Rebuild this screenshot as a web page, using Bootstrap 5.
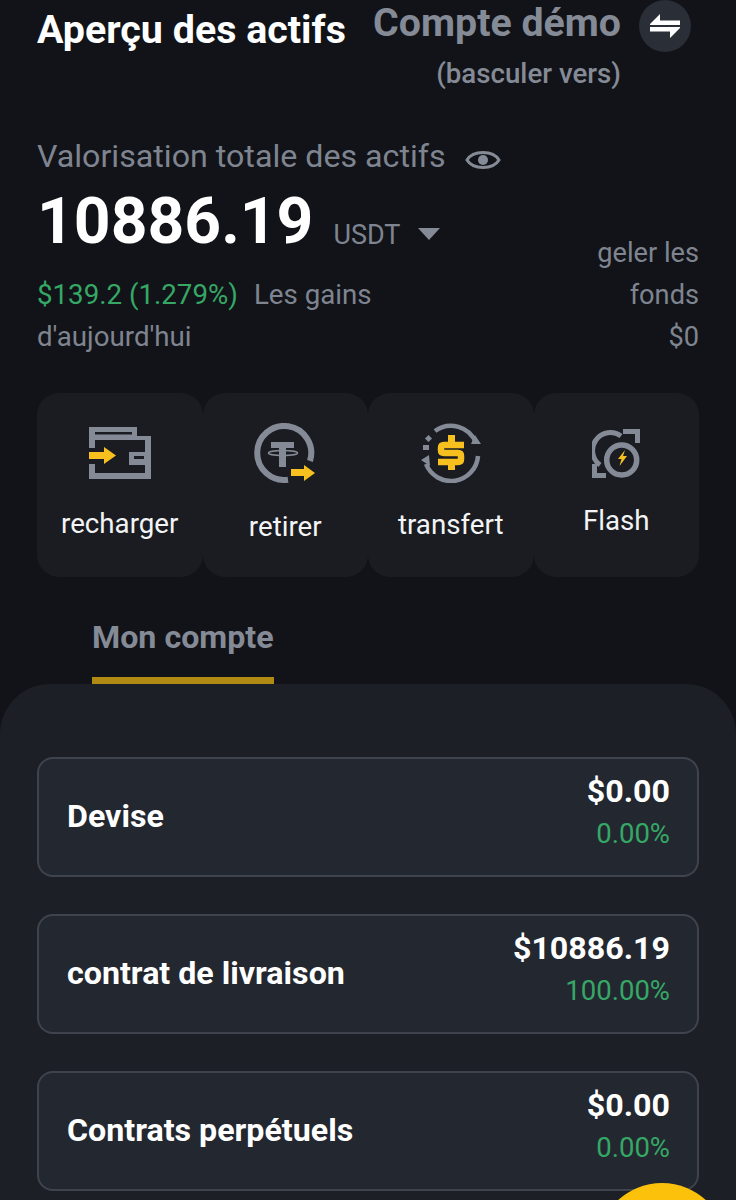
<!DOCTYPE html>
<html lang="fr">
<head>
    <meta charset="UTF-8">
    <meta name="viewport" content="width=device-width, initial-scale=1.0">
    <link href="https://cdn.jsdelivr.net/npm/bootstrap@5.3.1/dist/css/bootstrap.min.css" rel="stylesheet">
    <title>Aperçu des actifs</title>
    <style>
        html, body { height: 1200px; overflow: hidden; }
        body { background: #121318; font-family: Roboto, "Liberation Sans", sans-serif; color: #fff; }
        .top-area { padding: 0 37px; height: 684px; }
        .head-row { height: 136px; }
        .head-title { font-size: 39.4px; font-weight: 700; line-height: 42px; margin-top: 9px; }
        .demo-wrap { padding-right: 8px; gap: 18px; }
        .demo-text { color: #858b96; font-weight: 500; text-align: right; }
        .demo-name { font-size: 39.3px; font-weight: 700; line-height: 42px; margin-top: 2px; }
        .demo-sub { font-size: 27.7px; line-height: 32px; margin-top: 14px; }
        .swap-btn { width: 52px; height: 52px; border-radius: 50%; background: #2a2e37; }
        .muted-txt { color: #7f8590; }
        .total-label { font-size: 32.2px; line-height: 40px; }
        .eye-icon { margin-left: 3px; margin-top: 7px; }
        .total-num { font-size: 64.2px; font-weight: 700; line-height: 78px; margin-top: 6px; }
        .unit-txt { font-size: 27px; color: #7f8590; margin-left: 20px; margin-top: 39px; }
        .caret-down { width: 0; height: 0; border-left: 11px solid transparent; border-right: 11px solid transparent; border-top: 12px solid #858b96; margin-left: 18px; margin-top: 52px; }
        .gain-row { font-size: 27.7px; line-height: 42px; margin-top: 14px; }
        .gain-col { width: 380px; }
        .gain-word { margin-left: 16px; }
        .up-txt { color: #35a866; }
        .frozen-col { text-align: right; width: 120px; font-size: 27.2px; margin-top: -42px; }
        .tile-row { margin-top: 35px; }
        .tile-box { width: 25%; height: 184px; padding-top: 28px; background: #1a1c22; border-radius: 22px; }
        .icon-slot { height: 64px; }
        .tile-label { font-size: 27.7px; line-height: 32px; color: #f3f4f5; }
        .label-a { margin-top: 23px; }
        .label-b { margin-top: 26px; }
        .label-c { margin-top: 24px; }
        .label-d { margin-top: 20px; }
        .tab-row { padding-left: 55px; margin-top: 40px; }
        .tab-item { color: #858b96; font-size: 32.2px; font-weight: 700; line-height: 40px; border-bottom: 7px solid #b18a14; padding-bottom: 20px; }
        .panel-box { position: relative; overflow: hidden; background: #1c1f26; border-radius: 50px 50px 0 0; height: 516px; padding: 73px 37px 0; }
        .acct-card { background: #232730; border: 2px solid #3e434d; border-radius: 16px; height: 119.5px; padding: 0 27px 0 28px; margin-bottom: 37.5px; }
        .acct-name { font-size: 32.2px; font-weight: 700; margin-bottom: 2px; }
        .acct-amounts { margin-bottom: 6px; }
        .acct-val { font-size: 32.2px; font-weight: 700; line-height: 40px; text-align: right; }
        .acct-pct { font-size: 27.5px; line-height: 46px; text-align: right; }
        .fab-circle { position: absolute; left: 597px; top: 499px; width: 130px; height: 130px; border-radius: 50%; background: #fcc10a; }
    </style>
</head>
<body>
    <div class="top-area">
        <div class="d-flex justify-content-between head-row">
            <div class="head-title">Aperçu des actifs</div>
            <div class="d-flex demo-wrap">
                <div class="demo-text">
                    <div class="demo-name">Compte démo</div>
                    <div class="demo-sub">(basculer vers)</div>
                </div>
                <div class="swap-btn d-flex align-items-center justify-content-center">
                    <svg width="32" height="24" viewBox="0 0 32 24"><path d="M11 0 L1 10 V11 H31 V6.500 H11 Z" fill="#fff"/><path d="M21 24 L31 14 V13 H1 V17.500 H21 Z" fill="#fff"/></svg>
                </div>
            </div>
        </div>

        <div class="d-flex align-items-center gap-3">
            <div class="total-label muted-txt">Valorisation totale des actifs</div>
            <svg class="eye-icon" width="36" height="26" viewBox="0 0 36 26"><path d="M2 13 C8 3 28 3 34 13 C28 23 8 23 2 13 Z" fill="none" stroke="#858b96" stroke-width="3"/><circle cx="18" cy="13" r="5" fill="#858b96"/></svg>
        </div>
        <div class="d-flex align-items-start">
            <div class="total-num">10886.19</div>
            <div class="unit-txt">USDT</div>
            <div class="caret-down"></div>
        </div>
        <div class="d-flex justify-content-between gain-row">
            <div class="gain-col">
                <div class="d-flex">
                    <div class="up-txt">$139.2 (1.279%)</div>
                    <div class="muted-txt gain-word">Les gains</div>
                </div>
                <div class="muted-txt">d'aujourd'hui</div>
            </div>
            <div class="frozen-col muted-txt">geler les fonds<br>$0</div>
        </div>

        <div class="d-flex tile-row">
            <div class="tile-box d-flex flex-column align-items-center">
                <div class="icon-slot d-flex align-items-center">
                    <svg width="62" height="52" viewBox="0 0 62 52"><path d="M0 0 H48 V9 H62 V52 H0 V37 H6 V46 H56 V38 H40 V25 H56 V13 H6 V21 H0 Z M6 5 V7.500 H43 V5 Z M45 29 V32 H55 V29 Z" fill="#858b96" fill-rule="evenodd"/><path d="M0 25 H15 V20 L27 28.500 L15 37 V32 H0 Z" fill="#f7c01f"/></svg>
                </div>
                <div class="tile-label label-a">recharger</div>
            </div>
            <div class="tile-box d-flex flex-column align-items-center">
                <div class="icon-slot d-flex align-items-center">
                    <svg width="62" height="60" viewBox="0 0 62 60"><path d="M56 38 A27 27 0 1 0 34 56.700" fill="none" stroke="#858b96" stroke-width="6"/><path d="M17 19 H40 V25 H32 V44 H25 V25 H17 Z" fill="#858b96"/><ellipse cx="29" cy="30" rx="14.500" ry="2.500" fill="none" stroke="#858b96" stroke-width="1.500"/><path d="M37 46 H50 V42 L61 50 L50 58 V53 H37 Z" fill="#f7c01f"/></svg>
                </div>
                <div class="tile-label label-b">retirer</div>
            </div>
            <div class="tile-box d-flex flex-column align-items-center">
                <div class="icon-slot d-flex align-items-center">
                    <svg width="60" height="60" viewBox="0 0 60 60"><path d="M14 8 A27 27 0 0 1 55 20 M57 33 A27 27 0 0 1 5 41" fill="none" stroke="#858b96" stroke-width="4.500"/><path d="M50 21 L60 21 L54 12 Z M0 37 L8 32 L9 43 Z" fill="#858b96"/><rect x="5" y="13" width="5" height="5" fill="#858b96" transform="rotate(45 7.500 15.500)"/><rect x="2" y="22" width="6" height="5" fill="#858b96"/><path d="M43 22 H23 Q20 22 20 25 V27 Q20 30 23 30 H37 Q40 30 40 33 V36 Q40 39 37 39 H17" fill="none" stroke="#f7c01f" stroke-width="6.500"/><rect x="27" y="12" width="7" height="8" fill="#f7c01f"/><rect x="27" y="40" width="7" height="7" fill="#f7c01f"/></svg>
                </div>
                <div class="tile-label label-c">transfert</div>
            </div>
            <div class="tile-box d-flex flex-column align-items-center">
                <div class="icon-slot d-flex align-items-center">
                    <svg width="48" height="49" viewBox="0 0 48 49"><circle cx="29.700" cy="31" r="15" fill="none" stroke="#858b96" stroke-width="5.500"/><path d="M8 36 A16.500 16.500 0 0 1 29 7" fill="none" stroke="#858b96" stroke-width="5"/><path d="M31 0 H48 V14 H43 V5 H31 Z M0 35 H5 V44 H14 V49 H0 Z" fill="#858b96"/><path d="M33 21 L26 30 H29.500 L27.500 37 L35 27 H31 Z" fill="#f7c01f"/></svg>
                </div>
                <div class="tile-label label-d">Flash</div>
            </div>
        </div>

        <div class="d-flex tab-row">
            <div class="tab-item">Mon compte</div>
        </div>
    </div>

    <div class="panel-box">
        <div class="acct-card d-flex justify-content-between align-items-center">
            <div class="acct-name">Devise</div>
            <div class="acct-amounts">
                <div class="acct-val">$0.00</div>
                <div class="acct-pct up-txt">0.00%</div>
            </div>
        </div>
        <div class="acct-card d-flex justify-content-between align-items-center">
            <div class="acct-name">contrat de livraison</div>
            <div class="acct-amounts">
                <div class="acct-val">$10886.19</div>
                <div class="acct-pct up-txt">100.00%</div>
            </div>
        </div>
        <div class="acct-card d-flex justify-content-between align-items-center">
            <div class="acct-name">Contrats perpétuels</div>
            <div class="acct-amounts">
                <div class="acct-val">$0.00</div>
                <div class="acct-pct up-txt">0.00%</div>
            </div>
        </div>
        <div class="fab-circle"></div>
    </div>

    <script src="https://cdn.jsdelivr.net/npm/bootstrap@5.3.1/dist/js/bootstrap.bundle.min.js"></script>
</body>
</html>
